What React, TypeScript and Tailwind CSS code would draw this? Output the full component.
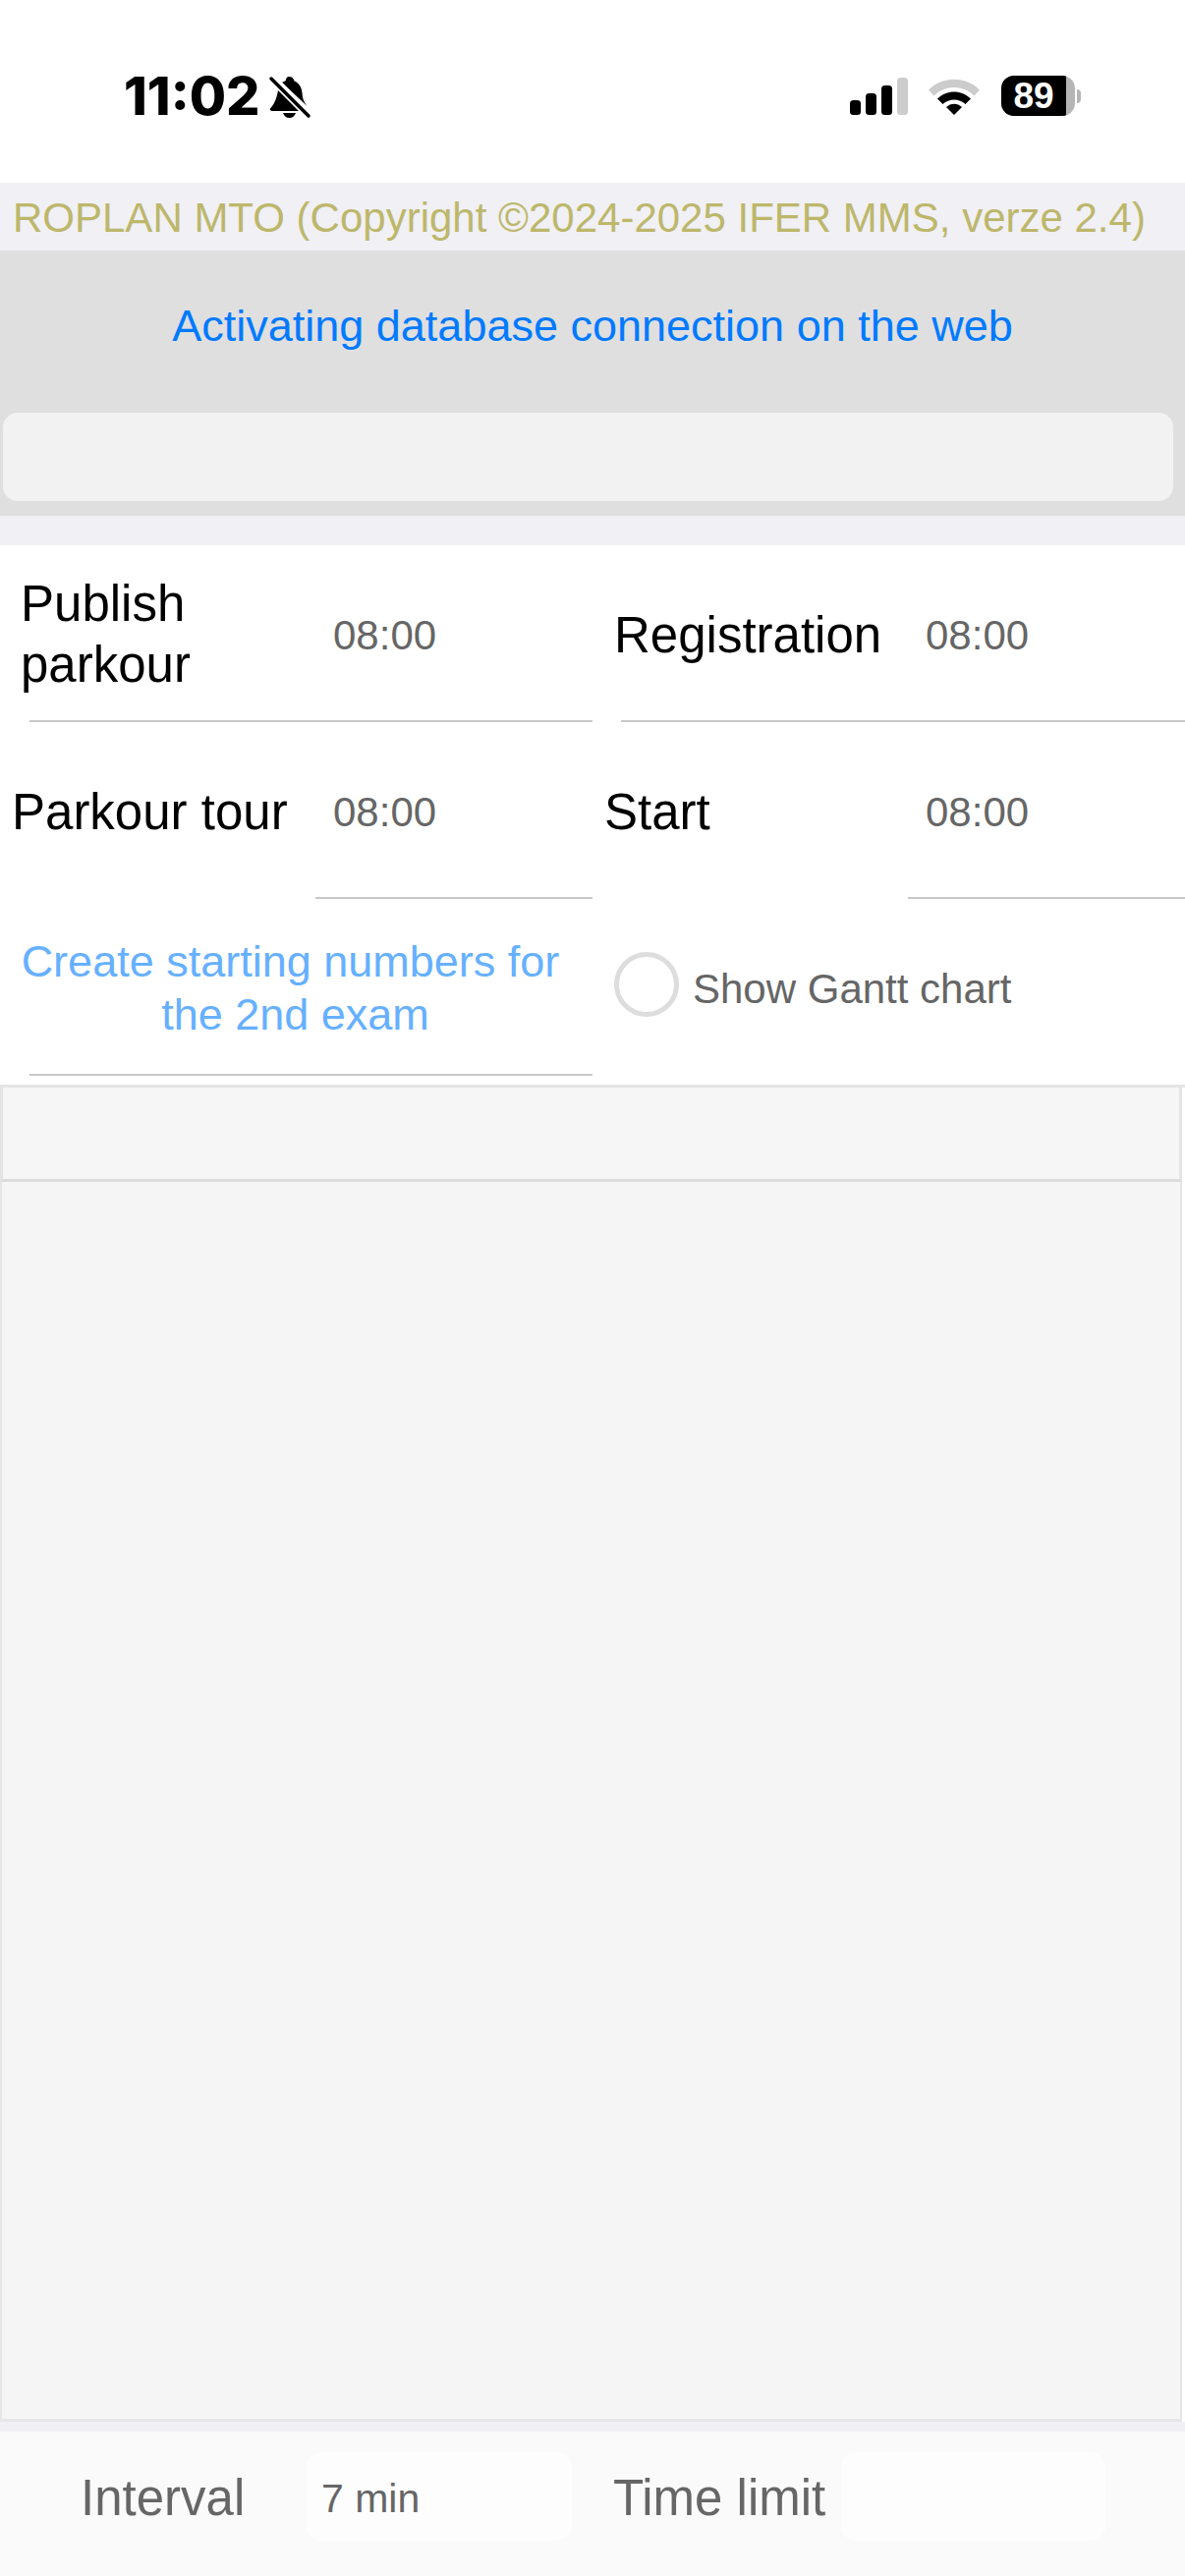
import React from 'react';

const font = { fontFamily: '"Liberation Sans", Arial, sans-serif' };

const BellSlash = () => (
  <svg width="44" height="44" viewBox="0 0 44 44" className="ml-[8px] mt-[2px]">
    <path d="M21 1c3 0 5 2 5.500 4.500 5 2 7.500 6.500 8 12 .5 6 1.500 9 5 13.500L14 7c1.500-1 3-1.500 3.500-1.500C18 3 19 1 21 1z" fill="#000" />
    <path d="M10 15 31 36H4c-1.500 0-2.500-1-2-2.500 3.500-4 6.500-9 8-18.500z" fill="#000" />
    <path d="M15 38h13c-1 3-3.500 5-6.500 5S16 41 15 38z" fill="#000" />
    <path d="M4 1 41 41" stroke="#fff" strokeWidth="7" />
    <path d="M3 3 41 41" stroke="#000" strokeWidth="3.500" strokeLinecap="round" />
  </svg>
);

const StatusIcons = () => (
  <div className="flex items-center">
    <svg width="60" height="38" viewBox="0 0 60 38">
      <rect x="0" y="23" width="11" height="15" rx="3.500" fill="#000" />
      <rect x="16" y="16" width="11" height="22" rx="3.500" fill="#000" />
      <rect x="32" y="8" width="11" height="30" rx="3.500" fill="#000" />
      <rect x="48" y="0" width="11" height="38" rx="3.500" fill="#cccccc" />
    </svg>
    <svg width="52" height="38" viewBox="0 0 52 38" className="ml-[20px]">
      <path d="M0 12.500C14-2 38-2 52 12.500l-5.500 6C35.500 7 16.500 7 5.500 18.500z" fill="#cccccc" />
      <path d="M9 21.500c9.500-9.500 24.500-9.500 34 0l-5.500 5.500c-6.500-6-16.500-6-23 0z" fill="#000" />
      <path d="M18 30c4.500-4.500 11.500-4.500 16 0l-8 8z" fill="#000" />
    </svg>
    <div className="relative ml-[22px] flex h-[41px] w-[75px] overflow-hidden rounded-[13px] bg-[#b5b5b5]">
      <div className="flex h-full w-[66px] items-center justify-center bg-black text-[37px] font-bold leading-none text-white">
        89
      </div>
    </div>
    <div className="ml-[2px] h-[14px] w-[4px] rounded-r-full bg-[#b5b5b5]" />
  </div>
);

const Cell = ({
  label,
  labelClass,
  divider,
}: {
  label: string;
  labelClass: string;
  divider: string;
}) => (
  <div className="flex h-[180px] flex-col">
    <div className="flex flex-1 items-center">
      {label === 'Publish parkour' ? (
        <div className={`pt-[3px] text-[51px] leading-[62px] text-black ${labelClass}`}>
          Publish
          <br />
          parkour
        </div>
      ) : (
        <div className={`pt-[5px] text-[51px] leading-[62px] text-black ${labelClass}`}>{label}</div>
      )}
      <div className="pt-[5px] text-[42px] leading-none text-[#666666]">08:00</div>
    </div>
    <div className={`h-[2px] bg-[#c8c8c8] ${divider}`} />
  </div>
);

export default function App() {
  return (
    <div className="flex h-[2622px] w-[1206px] flex-col overflow-hidden bg-white" style={font}>
      {/* Status bar */}
      <div className="flex h-[186px] shrink-0 items-start justify-between pl-[126px] pr-[106px] pt-[74px]">
        <div className="flex items-center">
          <span className="text-[54px] font-extrabold leading-[48px] text-black" style={{ fontFamily: 'Inter, sans-serif' }}>
            11:02
          </span>
          <BellSlash />
        </div>
        <div className="pt-[3px]">
          <StatusIcons />
        </div>
      </div>

      {/* Title */}
      <div className="flex h-[69px] shrink-0 items-center bg-[#f0f0f5] pl-[13px] pt-[2px] text-[42px] leading-none text-[#bdb76b]">
        ROPLAN MTO (Copyright ©2024-2025 IFER MMS, verze 2.4)
      </div>

      {/* Connection */}
      <div className="flex h-[270px] shrink-0 flex-col bg-[#dfdfdf] pl-[3px] pr-[12px]">
        <div className="flex h-[165px] items-center justify-center pb-[12px] pl-[9px] text-[45px] leading-none text-[#007aff]">
          Activating database connection on the web
        </div>
        <div className="h-[90px] rounded-[15px] bg-[#f2f2f2]" />
      </div>
      <div className="h-[30px] shrink-0 bg-[#f0f0f5]" />

      {/* Times */}
      <div className="grid shrink-0 grid-cols-[603px_603px]">
        <Cell label="Publish parkour" labelClass="w-[339px] pl-[21px]" divider="ml-[30px]" />
        <Cell label="Registration" labelClass="w-[339px] pl-[22px]" divider="ml-[29px]" />
        <Cell label="Parkour tour" labelClass="w-[339px] pl-[12px]" divider="ml-[321px]" />
        <Cell label="Start" labelClass="w-[339px] pl-[12px]" divider="ml-[321px]" />
        <div className="flex h-[180px] flex-col">
          <div className="flex flex-1 flex-col items-center pr-[2px] pt-[37px] text-center text-[45px] leading-[54px] text-[#66b0ff]">
            <span className="-ml-[10px]">Create starting numbers for</span>
            <span>the 2nd exam</span>
          </div>
          <div className="ml-[30px] h-[2px] bg-[#c8c8c8]" />
        </div>
        <div className="flex h-[180px] items-center pb-[6px] pl-[22px]">
          <div className="h-[66px] w-[66px] rounded-full border-[5px] border-[#dddddd]" />
          <span className="ml-[14px] pt-[9px] text-[42px] leading-none text-[#666666]">Show Gantt chart</span>
        </div>
      </div>

      {/* Table */}
      <div className="mt-[9px] flex min-h-0 flex-1 flex-col border-t-[3px] border-t-[#e4e4e4]">
        <div className="mr-[3px] h-[96px] shrink-0 border-x-[3px] border-b-[3px] border-x-[#e4e4e4] border-b-[#dcdcdc] bg-[#f6f6f6]" />
        <div className="mr-[3px] flex-1 border-x-[2px] border-b-[3px] border-[#e6e6e6] bg-[#f5f5f5]" />
      </div>
      <div className="h-[10px] shrink-0 bg-[#f0f0f5]" />

      {/* Footer */}
      <div className="flex h-[147px] shrink-0 items-start bg-[#fafafa] pt-[21px] text-[#666666]">
        <div className="flex h-[90px] w-[312px] items-center pl-[82px] pt-[3px] text-[51px] leading-none">Interval</div>
        <div className="flex h-[90px] w-[270px] items-center rounded-[15px] bg-[#fdfdfd] pl-[15px] pt-[4px] text-[41px] leading-none">
          7 min
        </div>
        <div className="flex h-[90px] w-[274px] items-center whitespace-nowrap pl-[42px] pt-[3px] text-[51px] leading-none">Time limit</div>
        <div className="h-[90px] w-[269px] rounded-[15px] bg-[#fdfdfd]" />
      </div>
    </div>
  );
}
